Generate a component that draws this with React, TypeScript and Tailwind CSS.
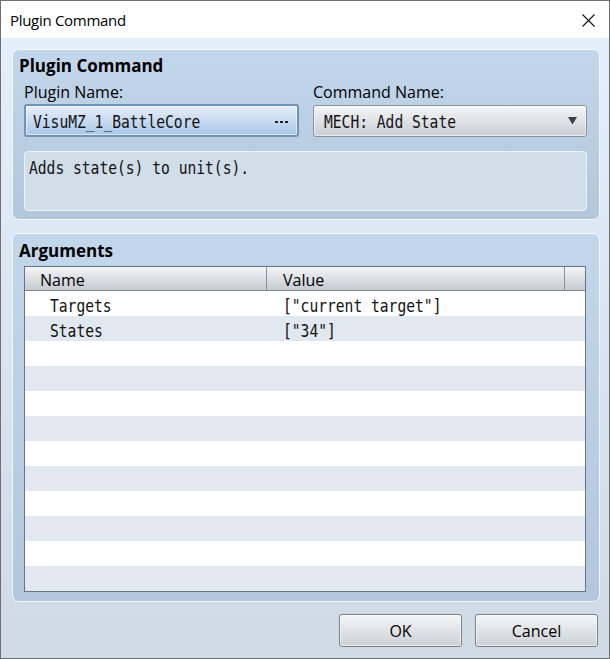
import React from "react";

const mono = "inline-block origin-left scale-x-[0.86] whitespace-pre font-['DejaVu_Sans_Mono',monospace] text-[17px] leading-[20px] text-[#111]";

function Mono({ children, className }: { children: React.ReactNode; className?: string }) {
  return <span className={mono + " " + (className ?? "")}>{children}</span>;
}

const rows: [string, string][] = [
  ["Targets", '["current target"]'],
  ["States", '["34"]'],
  ["", ""],
  ["", ""],
  ["", ""],
  ["", ""],
  ["", ""],
  ["", ""],
  ["", ""],
  ["", ""],
  ["", ""],
  ["", ""],
];

function Panel({ className, children }: { className?: string; children: React.ReactNode }) {
  return (
    <div
      className={
        "flex flex-col rounded-[7px] border border-[#f4f8fd] bg-linear-to-b from-[#c3d7ec] to-[#b3c7dc] " +
        (className ?? "")
      }
    >
      {children}
    </div>
  );
}

function Button({ label }: { label: string }) {
  return (
    <div className="w-[123px] h-[33px] flex items-center justify-center rounded-[3px] border border-[#7c7f84] bg-linear-to-b from-[#f4f5f6] to-[#cdd1d6] text-[16px] shadow-[inset_0_0_0_1px_rgba(255,255,255,0.6)]">
      {label}
    </div>
  );
}

export default function App() {
  return (
    <div className="w-[610px] h-[659px] flex flex-col border border-[#6f6f6f] bg-white overflow-hidden font-['Open_Sans',sans-serif] text-black">
      {/* title bar */}
      <div className="h-[37px] shrink-0 flex items-center justify-between pl-[9px] pr-[14px] bg-white">
        <span className="text-[15px] leading-[20px] tracking-[-0.3px]">Plugin Command</span>
        <svg width="13" height="13" viewBox="0 0 13 13" className="mt-[1px]">
          <path d="M0.5 0.5 L12.5 12.5 M12.5 0.5 L0.5 12.5" stroke="#111" strokeWidth="1.1" fill="none" />
        </svg>
      </div>

      {/* dialog body */}
      <div className="flex-1 flex flex-col bg-linear-to-b from-[#e4effc] to-[#cfdae5] pt-[11px] pl-[11px] pr-[9px] pb-[11px]">
        {/* plugin command group */}
        <Panel className="h-[171px] shrink-0">
          <div className="pl-[6px] pt-[6px] h-[25px] text-[17px] leading-[20px] font-bold">
            Plugin Command
          </div>
          <div className="flex gap-[14px] pl-[11px] mt-[6px]">
            <div className="w-[275px] flex flex-col">
              <div className="h-[20px] text-[16px] leading-[22px]">Plugin Name:</div>
              <div className="mt-[3px] h-[33px] flex items-center justify-between rounded-[3px] border-2 border-[#7393b6] bg-linear-to-b from-[#e7eff9] to-[#a9c7e8] pl-[7px] pr-[9px] shadow-[inset_0_0_0_1px_rgba(255,255,255,0.55)]">
                <Mono className="mt-[2px]">VisuMZ_1_BattleCore</Mono>
                <div className="flex gap-[2px] mt-[2px]">
                  <span className="w-[3px] h-[2px] bg-[#222]" />
                  <span className="w-[3px] h-[2px] bg-[#222]" />
                  <span className="w-[3px] h-[2px] bg-[#222]" />
                </div>
              </div>
            </div>
            <div className="w-[274px] flex flex-col">
              <div className="h-[20px] text-[16px] leading-[22px]">Command Name:</div>
              <div className="mt-[4px] h-[32px] flex items-center justify-between rounded-[3px] border border-[#8d939b] bg-linear-to-b from-[#f5f6f8] to-[#c8cdd4] pl-[10px] pr-[9px] shadow-[inset_0_0_0_1px_rgba(255,255,255,0.6)]">
                <Mono className="mt-[1px]">MECH: Add State</Mono>
                <svg width="9" height="8" viewBox="0 0 9 8">
                  <path d="M0 0 H9 L4.5 7.5 Z" fill="#3c3f44" />
                </svg>
              </div>
            </div>
          </div>
          <div className="ml-[11px] mt-[14px] w-[563px] h-[60px] rounded-[4px] border border-[#eef3f9] bg-[#d1dde9] pl-[4px] pt-[4px]">
            <Mono>Adds state(s) to unit(s).</Mono>
          </div>
        </Panel>

        {/* arguments group */}
        <Panel className="h-[369px] shrink-0 mt-[13px]">
          <div className="pl-[6px] pt-[7px] h-[27px] text-[17px] leading-[20px] font-bold">
            Arguments
          </div>
          <div className="ml-[11px] mt-[5px] w-[562px] h-[326px] flex flex-col border border-[#687481] bg-white">
            <div className="h-[24px] shrink-0 flex border-b border-[#7d858f] bg-linear-to-b from-[#f4f5f7] to-[#c6cbd2] text-[16px] leading-[26px]">
              <div className="w-[242px] border-r border-[#8a9099] pl-[15px]">Name</div>
              <div className="w-[298px] border-r border-[#8a9099] pl-[16px]">Value</div>
              <div className="flex-1" />
            </div>
            {rows.map(([name, value], i) => (
              <div
                key={i}
                className={
                  "h-[25px] shrink-0 flex items-center pt-[4px] " + (i % 2 === 0 ? "bg-white" : "bg-[#e1e8ef]")
                }
              >
                <div className="w-[242px] pl-[25px] leading-[20px]">{name && <Mono>{name}</Mono>}</div>
                <div className="flex-1 pl-[16px] leading-[20px]">{value && <Mono>{value}</Mono>}</div>
              </div>
            ))}
          </div>
        </Panel>

        {/* dialog buttons */}
        <div className="mt-[12px] h-[33px] flex justify-end gap-[13px] mr-[2px]">
          <Button label="OK" />
          <Button label="Cancel" />
        </div>
      </div>
    </div>
  );
}
